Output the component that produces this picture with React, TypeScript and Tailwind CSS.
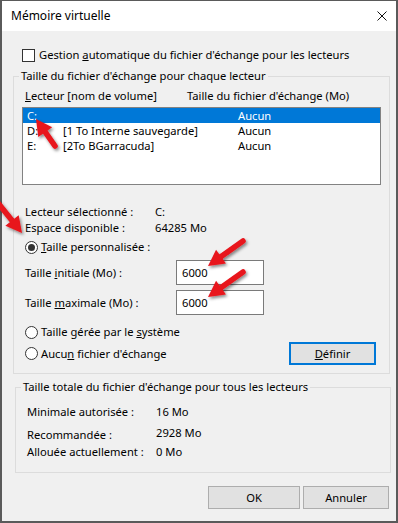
import React from "react";

// Windows 10 "Mémoire virtuelle" dialog with red annotation arrows

const ui = "[font-family:'Noto_Sans',sans-serif] text-[11.2px] leading-[16px] text-black";

function Radio({ checked }: { checked?: boolean }) {
  return (
    <span className="w-[13px] h-[13px] rounded-full border border-[#333] bg-white flex items-center justify-center shrink-0">
      {checked && <span className="w-[7px] h-[7px] rounded-full bg-[#333]" />}
    </span>
  );
}

function Arrow({ x1, y1, x2, y2 }: { x1: number; y1: number; x2: number; y2: number }) {
  const dx = x2 - x1;
  const dy = y2 - y1;
  const len = Math.hypot(dx, dy);
  const ux = dx / len;
  const uy = dy / len;
  const px = -uy;
  const py = ux;
  const hl = 16;
  const hw = 8.5;
  const bx = x2 - ux * hl;
  const by = y2 - uy * hl;
  const head = `${x2},${y2} ${bx + px * hw},${by + py * hw} ${bx - px * hw},${by - py * hw}`;
  return (
    <g filter="url(#shadow)">
      <line x1={x1} y1={y1} x2={bx + ux * 2} y2={by + uy * 2} stroke="#e8141b" strokeWidth={5.5} strokeLinecap="round" />
      <polygon points={head} fill="#e8141b" />
    </g>
  );
}

const drives = [
  { letter: "C:", name: "", size: "Aucun", selected: true },
  { letter: "D:", name: "[1 To Interne sauvegarde]", size: "Aucun" },
  { letter: "E:", name: "[2To BGarracuda]", size: "Aucun" },
];

export default function App() {
  return (
    <div className={`relative w-[398px] h-[523px] border-x-2 border-b-2 border-t border-[#5a5a5a] bg-[#f0f0f0] flex flex-col ${ui}`}>
      {/* title bar */}
      <div className="h-[30px] bg-white flex items-center justify-between pl-[9px] pr-[9px] shrink-0">
        <span className="text-[12px]">Mémoire virtuelle</span>
        <svg width="10" height="10" viewBox="0 0 10 10">
          <path d="M0.5 0.5 L9.5 9.5 M9.5 0.5 L0.5 9.5" stroke="#111" strokeWidth="1" />
        </svg>
      </div>

      {/* body */}
      <div className="flex flex-col">
        <div className="mt-[16px] ml-[20px] h-[16px] flex items-center gap-[4px]">
          <span className="w-[13px] h-[13px] border border-[#333] bg-white shrink-0" />
          <span>
            Gestion <u>a</u>utomatique du fichier d'échange pour les lecteurs
          </span>
        </div>

        <fieldset className="mt-[5px] ml-[11px] w-[377px] border border-[#dcdcdc] pb-[8px]">
          <legend className="ml-[5px] px-[2px] h-[16px]">Taille du fichier d'échange pour chaque lecteur</legend>

          <div className="mt-[4px] ml-[11px] flex">
            <span className="w-[162px]">
              <u>L</u>ecteur [nom de volume]
            </span>
            <span>Taille du fichier d'échange (Mo)</span>
          </div>

          <div className="mt-[3px] ml-[8px] w-[359px] h-[78px] border border-[#828282] bg-white">
            {drives.map((d) => (
              <div
                key={d.letter}
                className={`h-[15px] leading-[15px] flex items-center pl-[4px] ${d.selected ? "bg-[#0078d7] text-white" : ""}`}
              >
                <span className="w-[36px]">{d.letter}</span>
                <span className="w-[175px]">{d.name}</span>
                <span>{d.size}</span>
              </div>
            ))}
          </div>

          <div className="mt-[19px] ml-[11px] flex">
            <span className="w-[130px]">Lecteur sélectionné :</span>
            <span>C:</span>
          </div>
          <div className="ml-[11px] flex">
            <span className="w-[130px]">Espace disponible :</span>
            <span>64285 Mo</span>
          </div>

          <div className="mt-[3px] ml-[11px] h-[16px] flex items-center gap-[3px]">
            <Radio checked />
            <span>
              <u>T</u>aille personnalisée :
            </span>
          </div>

          <div className="mt-[5px] ml-[11px] flex items-center">
            <span className="w-[151px]">
              Taille <u>i</u>nitiale (Mo) :
            </span>
            <div className="w-[88px] h-[25px] border border-[#7a7a7a] bg-white flex items-center pl-[5px]">6000</div>
          </div>
          <div className="mt-[5px] ml-[11px] flex items-center">
            <span className="w-[151px]">
              Taille <u>m</u>aximale (Mo) :
            </span>
            <div className="w-[88px] h-[25px] border border-[#7a7a7a] bg-white flex items-center pl-[5px]">6000</div>
          </div>

          <div className="mt-[9px] ml-[11px] h-[16px] flex items-center gap-[3px]">
            <Radio />
            <span>
              Taille gérée par le <u>s</u>ystème
            </span>
          </div>

          <div className="mt-[2px] ml-[11px] pr-[13px] h-[23px] flex items-center justify-between">
            <div className="flex items-center gap-[3px]">
              <Radio />
              <span>
                Aucu<u>n</u> fichier d'échange
              </span>
            </div>
            <button className="w-[87px] h-[23px] border-2 border-[#0078d7] bg-[#e1e1e1] flex items-center justify-center">
              <span>
                <u>D</u>éfinir
              </span>
            </button>
          </div>
        </fieldset>

        <fieldset className="mt-[5px] ml-[13px] w-[376px] border border-[#dcdcdc] pb-[12px]">
          <legend className="ml-[5px] px-[2px] h-[16px]">Taille totale du fichier d'échange pour tous les lecteurs</legend>
          <div className="mt-[9px] ml-[11px] flex">
            <span className="w-[129px]">Minimale autorisée :</span>
            <span>16 Mo</span>
          </div>
          <div className="mt-[5px] ml-[11px] flex items-start">
            <span className="w-[129px] mt-[2px]">Recommandée :</span>
            <span>2928 Mo</span>
          </div>
          <div className="mt-[1px] ml-[11px] flex">
            <span className="w-[129px]">Allouée actuellement :</span>
            <span>0 Mo</span>
          </div>
        </fieldset>

        <div className="mt-[13px] pr-[7px] flex justify-end gap-[3px]">
          <button className="w-[92px] h-[23px] border border-[#adadad] bg-[#e1e1e1]">OK</button>
          <button className="w-[86px] h-[23px] border border-[#adadad] bg-[#e1e1e1]">Annuler</button>
        </div>
      </div>

      {/* annotation arrows drawn over the screenshot */}
      <svg className="absolute left-[-2px] top-[-1px] pointer-events-none" width="398" height="523">
        <defs>
          <filter id="shadow" x="-50%" y="-50%" width="200%" height="200%">
            <feDropShadow dx="1.5" dy="2" stdDeviation="1.5" floodColor="#000" floodOpacity="0.45" />
          </filter>
        </defs>
        <Arrow x1={55} y1={146} x2={36} y2={119} />
        <Arrow x1={-2} y1={203} x2={22} y2={233} />
        <Arrow x1={243} y1={241} x2={208} y2={266} />
        <Arrow x1={243} y1={272} x2={208} y2={297} />
      </svg>
    </div>
  );
}
